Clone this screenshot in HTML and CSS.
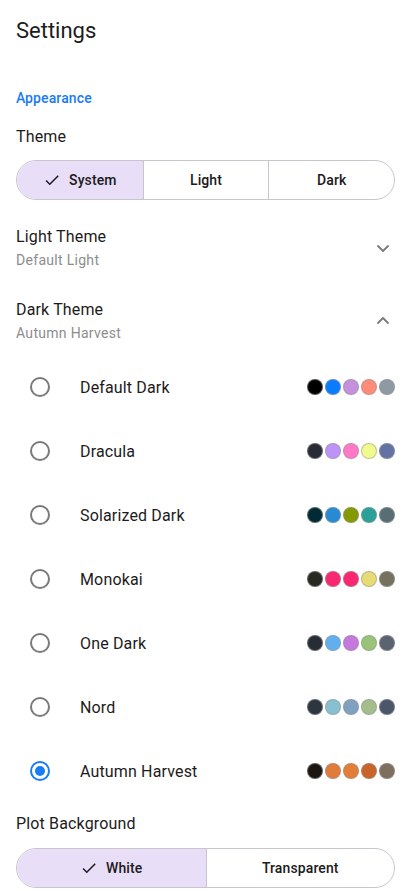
FILE: index.html
```html
<!DOCTYPE html>
<html lang="en">
<head>
<meta charset="utf-8">
<title>Settings</title>
<link rel="stylesheet" href="styles.css">
</head>
<body>
<div class="page">
  <h1 class="title">Settings</h1>
  <div class="section-label">Appearance</div>
  <div class="field-label theme-label">Theme</div>
  <div class="seg seg-3">
    <div class="seg-item selected">
      <svg class="check" viewBox="0 0 24 24" width="18" height="18"><path d="M9 16.17L4.83 12l-1.42 1.41L9 19 21 7l-1.41-1.41z" fill="#1d1b20"/></svg>
      <span>System</span>
    </div>
    <div class="seg-item"><span>Light</span></div>
    <div class="seg-item"><span>Dark</span></div>
  </div>

  <div class="expand-list">
    <div class="expand-item">
      <div class="expand-text">
        <div class="expand-title">Light Theme</div>
        <div class="expand-sub">Default Light</div>
      </div>
      <svg class="chev" viewBox="0 0 24 24" width="24" height="24"><path d="M7 10l5 5 5-5" fill="none" stroke="#7a7a7a" stroke-width="1.8" stroke-linecap="round" stroke-linejoin="round"/></svg>
    </div>
    <div class="expand-item">
      <div class="expand-text">
        <div class="expand-title">Dark Theme</div>
        <div class="expand-sub">Autumn Harvest</div>
      </div>
      <svg class="chev" viewBox="0 0 24 24" width="24" height="24"><path d="M7 14l5-5 5 5" fill="none" stroke="#7a7a7a" stroke-width="1.8" stroke-linecap="round" stroke-linejoin="round"/></svg>
    </div>
  </div>

  <div class="radio-list">
    <div class="radio-row">
      <span class="radio"></span>
      <span class="radio-label">Default Dark</span>
      <span class="dots">
        <i class="dot" style="background:#000000"></i><i class="dot" style="background:#0a7cff"></i><i class="dot" style="background:#c690dc"></i><i class="dot" style="background:#ff8b78"></i><i class="dot" style="background:#8e99a3"></i>
      </span>
    </div>
    <div class="radio-row">
      <span class="radio"></span>
      <span class="radio-label">Dracula</span>
      <span class="dots">
        <i class="dot" style="background:#282a36"></i><i class="dot" style="background:#bd93f9"></i><i class="dot" style="background:#ff79c6"></i><i class="dot" style="background:#f1fa8c"></i><i class="dot" style="background:#6272a4"></i>
      </span>
    </div>
    <div class="radio-row">
      <span class="radio"></span>
      <span class="radio-label">Solarized Dark</span>
      <span class="dots">
        <i class="dot" style="background:#002b36"></i><i class="dot" style="background:#268bd2"></i><i class="dot" style="background:#859900"></i><i class="dot" style="background:#2aa198"></i><i class="dot" style="background:#586e75"></i>
      </span>
    </div>
    <div class="radio-row">
      <span class="radio"></span>
      <span class="radio-label">Monokai</span>
      <span class="dots">
        <i class="dot" style="background:#272822"></i><i class="dot" style="background:#f92672"></i><i class="dot" style="background:#f92672"></i><i class="dot" style="background:#e6db74"></i><i class="dot" style="background:#75715e"></i>
      </span>
    </div>
    <div class="radio-row">
      <span class="radio"></span>
      <span class="radio-label">One Dark</span>
      <span class="dots">
        <i class="dot" style="background:#282c34"></i><i class="dot" style="background:#61afef"></i><i class="dot" style="background:#c678dd"></i><i class="dot" style="background:#98c379"></i><i class="dot" style="background:#5c6370"></i>
      </span>
    </div>
    <div class="radio-row">
      <span class="radio"></span>
      <span class="radio-label">Nord</span>
      <span class="dots">
        <i class="dot" style="background:#2e3440"></i><i class="dot" style="background:#88c0d0"></i><i class="dot" style="background:#81a1c1"></i><i class="dot" style="background:#a3be8c"></i><i class="dot" style="background:#4c566a"></i>
      </span>
    </div>
    <div class="radio-row">
      <span class="radio checked"></span>
      <span class="radio-label">Autumn Harvest</span>
      <span class="dots">
        <i class="dot" style="background:#1c1612"></i><i class="dot" style="background:#e07b3a"></i><i class="dot" style="background:#e37e38"></i><i class="dot" style="background:#c8642a"></i><i class="dot" style="background:#7d6e5d"></i>
      </span>
    </div>
  </div>

  <div class="field-label plot-label">Plot Background</div>
  <div class="seg seg-2">
    <div class="seg-item selected">
      <svg class="check" viewBox="0 0 24 24" width="18" height="18"><path d="M9 16.17L4.83 12l-1.42 1.41L9 19 21 7l-1.41-1.41z" fill="#1d1b20"/></svg>
      <span>White</span>
    </div>
    <div class="seg-item"><span>Transparent</span></div>
  </div>
</div>
</body>
</html>
```

FILE: styles.css
```css
* { box-sizing: border-box; }

html, body {
  margin: 0;
  padding: 0;
  background: #ffffff;
}

body {
  font-family: Roboto, "Noto Sans", "Liberation Sans", sans-serif;
  color: #1d1b20;
  width: 411px;
  overflow: hidden;
}

.page {
  display: flex;
  flex-direction: column;
}

.title {
  margin: 0;
  padding: 16px 16px 0;
  font-size: 22px;
  font-weight: 400;
  line-height: 30px;
}

.section-label {
  margin-top: 42px;
  padding: 0 16px;
  font-family: "Roboto Medium", Roboto, "Noto Sans", sans-serif;
  font-size: 14px;
  font-weight: 500;
  line-height: 20px;
  color: #1a7cf5;
  letter-spacing: 0.1px;
}

.field-label {
  padding: 0 16px;
  font-size: 16px;
  line-height: 24px;
  letter-spacing: 0.15px;
}

.theme-label {
  margin-top: 17px;
}

.plot-label {
  margin-top: 9px;
}

.seg {
  margin: 11px 16px 0;
  height: 40px;
  border: 1px solid #c9c5cd;
  border-radius: 20px;
  overflow: hidden;
  display: grid;
}

.plot-label + .seg {
  margin-top: 12px;
}

.seg-3 { grid-template-columns: 1fr 1fr 1fr; }
.seg-2 { grid-template-columns: 1fr 1fr; }

.seg-item {
  display: flex;
  align-items: center;
  justify-content: center;
  gap: 8px;
  font-family: "Roboto Medium", Roboto, "Noto Sans", sans-serif;
  font-size: 14px;
  font-weight: 500;
  letter-spacing: 0.1px;
  border-left: 1px solid #c9c5cd;
}

.seg-item:first-child { border-left: none; }

.seg-item.selected {
  background: #e8def8;
}

.check { display: block; }

.expand-list {
  margin-top: 11px;
  display: flex;
  flex-direction: column;
  gap: 2px;
}

.expand-item {
  display: flex;
  align-items: center;
  padding: 14px 16px 12px;
}

.expand-text {
  flex: 1;
}

.expand-title {
  font-size: 16px;
  line-height: 24px;
  letter-spacing: 0.15px;
}

.expand-sub {
  margin-top: 1px;
  font-size: 14px;
  line-height: 20px;
  color: #8d8d8d;
  letter-spacing: 0.3px;
}

.chev { display: block; }

.radio-list {
  display: flex;
  flex-direction: column;
}

.radio-row {
  height: 64px;
  display: flex;
  align-items: center;
  padding: 0 16px 0 30px;
}

.radio {
  width: 20px;
  height: 20px;
  border: 2px solid #7a7a7a;
  border-radius: 50%;
  flex: none;
  display: flex;
  align-items: center;
  justify-content: center;
}

.radio.checked {
  border-color: #1a7cf5;
}

.radio.checked::after {
  content: "";
  width: 10px;
  height: 10px;
  border-radius: 50%;
  background: #1a7cf5;
}

.radio-label {
  margin-left: 30px;
  flex: 1;
  font-size: 16px;
  letter-spacing: 0.15px;
}

.dots {
  display: flex;
  gap: 2px;
}

.dot {
  display: block;
  width: 16px;
  height: 16px;
  border-radius: 50%;
  border: 1px solid rgba(150, 150, 150, 0.55);
}
```
